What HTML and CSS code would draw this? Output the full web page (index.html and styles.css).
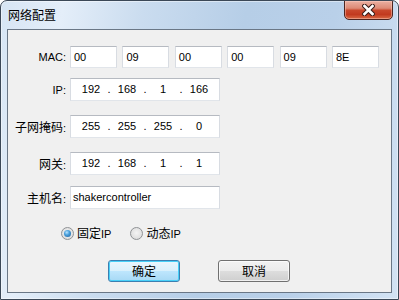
FILE: index.html
```html
<!DOCTYPE html>
<html>
<head>
<meta charset="utf-8">
<link rel="stylesheet" href="styles.css">
</head>
<body>
<div class="window">
  <div class="titlebar">
    <span class="title">网络配置</span>
    <div class="close">
      <svg width="13" height="12" viewBox="0 0 13 12">
        <path d="M2.5 2 L10.5 10 M10.5 2 L2.5 10" stroke="#3b1d18" stroke-width="4.6" stroke-linecap="square" fill="none"/>
        <path d="M2.5 2 L10.5 10 M10.5 2 L2.5 10" stroke="#ffffff" stroke-width="2.6" stroke-linecap="square" fill="none"/>
      </svg>
    </div>
  </div>
  <div class="client">
    <div class="row">
      <span class="lbl">MAC:</span>
      <div class="macs">
        <div class="tb">00</div>
        <div class="tb">09</div>
        <div class="tb">00</div>
        <div class="tb">00</div>
        <div class="tb">09</div>
        <div class="tb">8E</div>
      </div>
    </div>
    <div class="row r-ip">
      <span class="lbl">IP:</span>
      <div class="ipbox"><span class="oct">192</span><span class="dot">.</span><span class="oct">168</span><span class="dot">.</span><span class="oct">1</span><span class="dot">.</span><span class="oct">166</span></div>
    </div>
    <div class="row r-mask">
      <span class="lbl"><span class="cjk">子网掩码</span>:</span>
      <div class="ipbox"><span class="oct">255</span><span class="dot">.</span><span class="oct">255</span><span class="dot">.</span><span class="oct">255</span><span class="dot">.</span><span class="oct">0</span></div>
    </div>
    <div class="row r-gw">
      <span class="lbl"><span class="cjk">网关</span>:</span>
      <div class="ipbox"><span class="oct">192</span><span class="dot">.</span><span class="oct">168</span><span class="dot">.</span><span class="oct">1</span><span class="dot">.</span><span class="oct">1</span></div>
    </div>
    <div class="row r-host">
      <span class="lbl"><span class="cjk">主机名</span>:</span>
      <div class="hostbox">shakercontroller</div>
    </div>
    <div class="radios">
      <span class="radio on"></span><span class="rtext"><span class="cjk">固定</span>IP</span>
      <span class="radio"></span><span class="rtext"><span class="cjk">动态</span>IP</span>
    </div>
    <div class="buttons">
      <div class="btn default"><span class="cjk">确定</span></div>
      <div class="btn"><span class="cjk">取消</span></div>
    </div>
  </div>
</div>
</body>
</html>
```
FILE: styles.css
```css
html, body {
  margin: 0;
  padding: 0;
  background: #ffffff;
}
.window {
  width: 399px;
  height: 300px;
  box-sizing: border-box;
  border: 1px solid #3b4857;
  border-radius: 7px 7px 0 0;
  background: linear-gradient(100deg, #d6e5f4 0%, #e4eef9 14%, #cadcef 32%, #b6cee7 55%, #b9d0e9 75%, #d3e3f4 100%);
  box-shadow: inset 0 0 0 1px rgba(255,255,255,0.45);
  display: flex;
  flex-direction: column;
  overflow: hidden;
  font-family: "Liberation Sans", "Noto Sans CJK SC", sans-serif;
  font-size: 11px;
  color: #000;
}
.cjk {
  font-family: "Noto Sans CJK SC", sans-serif;
  font-size: 12px;
}
.titlebar {
  height: 28px;
  flex: none;
  display: flex;
  align-items: flex-start;
}
.title {
  padding-left: 7px;
  font-family: "Noto Sans CJK SC", sans-serif;
  font-size: 12px;
  line-height: 27px;
  color: #000;
}
.close {
  margin-left: auto;
  margin-right: 5px;
  margin-top: -1px;
  width: 49px;
  height: 20px;
  box-sizing: border-box;
  border: 1px solid #4d2520;
  border-radius: 0 0 5px 5px;
  background: linear-gradient(#eab0a2 0%, #dc8a76 40%, #c9482c 52%, #c23a1f 75%, #d96a45 100%);
  box-shadow: inset 0 0 0 1px rgba(255,210,200,0.45);
  display: flex;
  align-items: center;
  justify-content: center;
}
.client {
  flex: 1;
  margin: 0 6px 6px;
  border: 1px solid #6a7786;
  background: #f0f0f0;
  padding-top: 16px;
}
.row {
  display: flex;
  align-items: center;
}
.lbl {
  width: 58px;
  padding-right: 4px;
  text-align: right;
  flex: none;
  white-space: nowrap;
}
.macs {
  display: flex;
  gap: 5.4px;
}
.tb, .ipbox, .hostbox {
  box-sizing: border-box;
  background: #fff;
  border: 1px solid;
  border-color: #b6bac1 #d8dce2 #e1e5ea #d8dce2;
}
.tb {
  width: 47px;
  height: 22px;
  line-height: 20px;
  padding-left: 3px;
}
.r-ip { margin-top: 10px; }
.r-mask { margin-top: 14px; }
.r-gw { margin-top: 14px; }
.r-host { margin-top: 11px; }
.ipbox {
  width: 150px;
  height: 23px;
  display: flex;
  padding-left: 6px;
  line-height: 21px;
}
.oct {
  width: 28px;
  text-align: center;
}
.dot {
  width: 8px;
  text-align: center;
}
.hostbox {
  width: 150px;
  height: 23px;
  line-height: 21px;
  padding-left: 2px;
}
.radios {
  margin-top: 18px;
  padding-left: 53px;
  display: flex;
  align-items: center;
  height: 13px;
  line-height: 13px;
}
.radio {
  width: 13px;
  height: 13px;
  box-sizing: border-box;
  border-radius: 50%;
  border: 1px solid #8f9295;
  background: radial-gradient(circle at 50% 45%, #f4f4f4 0%, #e2e2e2 60%, #d4d4d4 100%);
  display: flex;
  align-items: center;
  justify-content: center;
  margin-right: 3px;
  flex: none;
}
.radio.on::after {
  content: "";
  width: 7px;
  height: 7px;
  border-radius: 50%;
  background: radial-gradient(circle at 40% 35%, #b9e4ff 0%, #4aa0dc 40%, #1b5d9a 100%);
}
.rtext {
  margin-right: 19px;
  white-space: nowrap;
}
.buttons {
  margin-top: 20px;
  padding-left: 100px;
  display: flex;
  gap: 38px;
}
.btn {
  width: 72px;
  height: 22px;
  box-sizing: border-box;
  border: 1px solid #707070;
  border-radius: 3px;
  background: linear-gradient(#f2f2f2 0%, #ebebeb 50%, #dddddd 51%, #cfcfcf 100%);
  box-shadow: inset 0 0 0 1px rgba(255,255,255,0.7);
  display: flex;
  align-items: center;
  justify-content: center;
  line-height: 20px;
}
.btn.default {
  border-color: #3c7fb1;
  background: linear-gradient(#eaf6fd 0%, #d9f0fc 50%, #bee6fd 51%, #a7d9f5 100%);
  box-shadow: inset 0 0 0 1px #48d0f8;
}
```
